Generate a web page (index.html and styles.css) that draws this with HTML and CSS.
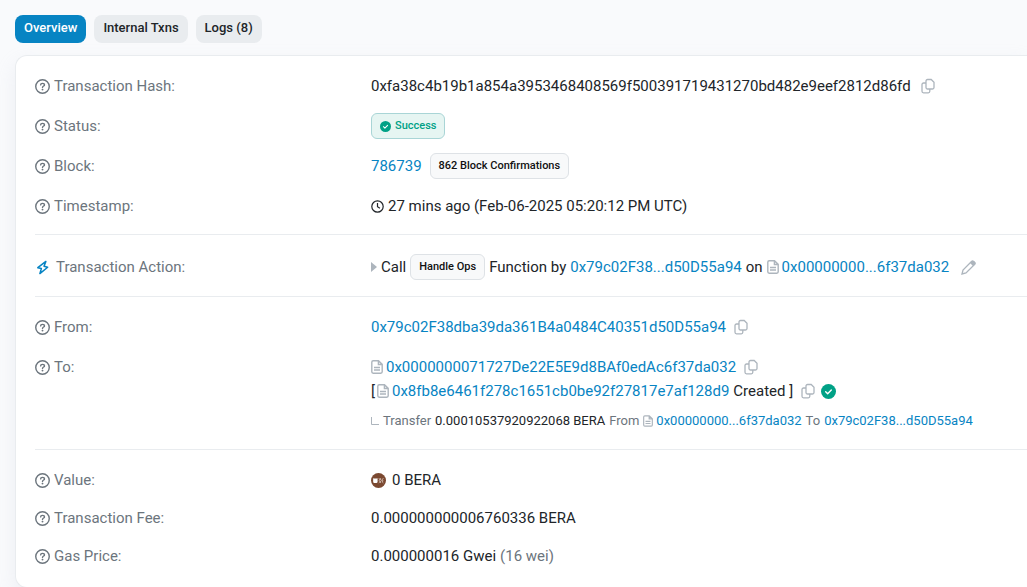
FILE: index.html
```html
<!DOCTYPE html>
<html lang="en">
<head>
<meta charset="utf-8">
<title>Transaction Details</title>
<meta name="viewport" content="width=device-width, initial-scale=1">
<link rel="stylesheet" href="styles.css">
</head>
<body>
<svg class="sprite" aria-hidden="true">
  <symbol id="help" viewBox="0 0 16 16"><circle cx="8" cy="8" r="7.200" fill="none" stroke="currentColor" stroke-width="1.500"/><path d="M6 6.300C6 5.200 6.700 4.700 8 4.700s2.100.6 2.100 1.600C10.100 7.500 8 7.500 8 9" fill="none" stroke="currentColor" stroke-width="1.500" stroke-linecap="round"/><circle cx="8" cy="11.300" r="1" fill="currentColor"/></symbol>
  <symbol id="copy" viewBox="0 0 14 16"><path d="M6.500 1.500h3.700l2.800 2.700v5.300a1.500 1.500 0 0 1-1.500 1.500h-5A1.500 1.500 0 0 1 5 9.500V3a1.500 1.500 0 0 1 1.500-1.500zM5 5H2.500A1.500 1.500 0 0 0 1 6.500v6.800a1.500 1.500 0 0 0 1.500 1.500h4.800a1.500 1.500 0 0 0 1.500-1.500V11" fill="none" stroke="currentColor" stroke-width="1.300"/></symbol>
  <symbol id="doc" viewBox="0 0 12 14"><path d="M2.200.8h5.300l3.700 3.600v7.400a1.400 1.400 0 0 1-1.400 1.400H2.200A1.400 1.400 0 0 1 .8 11.800V2.200A1.400 1.400 0 0 1 2.200.8zM7.400 1v3.500H11M3 7.500h6M3 10h6" fill="none" stroke="currentColor" stroke-width="1.400"/></symbol>
  <symbol id="check" viewBox="0 0 16 16"><circle cx="8" cy="8" r="8" fill="currentColor"/><path d="M5 8.300l2.100 2 3.900-4" fill="none" stroke="#fff" stroke-width="1.500" stroke-linecap="round" stroke-linejoin="round"/></symbol>
</svg>

<nav class="tabs">
  <button class="tab active" type="button">Overview</button>
  <button class="tab" type="button">Internal Txns</button>
  <button class="tab" type="button">Logs (8)</button>
</nav>

<main class="card">
  <dl class="section">
    <div class="row">
      <dt><svg class="help"><use href="#help"/></svg>Transaction Hash:</dt>
      <dd><div class="line">0xfa38c4b19b1a854a3953468408569f500391719431270bd482e9eef2812d86fd<button class="icon-btn hash-copy" type="button" aria-label="Copy hash"><svg class="copy"><use href="#copy"/></svg></button></div></dd>
    </div>
    <div class="row">
      <dt><svg class="help"><use href="#help"/></svg>Status:</dt>
      <dd><div class="line"><span class="badge success"><svg class="check-small"><use href="#check"/></svg>Success</span></div></dd>
    </div>
    <div class="row">
      <dt><svg class="help"><use href="#help"/></svg>Block:</dt>
      <dd><div class="line wide"><a href="#block">786739</a><span class="badge">862 Block Confirmations</span></div></dd>
    </div>
    <div class="row">
      <dt><svg class="help"><use href="#help"/></svg>Timestamp:</dt>
      <dd><div class="line"><svg class="clock" viewBox="0 0 13 13"><circle cx="6.500" cy="6.500" r="5.700"/><path d="M6.500 3v3.700l2.400 1.600"/></svg>27 mins ago (Feb-06-2025 05:20:12 PM UTC)</div></dd>
    </div>
  </dl>

  <dl class="section action-section">
    <div class="row">
      <dt class="action"><svg class="bolt" viewBox="0 0 14 16"><path d="M10.600 1.500 2 8.200l3.800.9-1.600 5.400 8.300-6.800-3.900-1z"/></svg>Transaction Action:</dt>
      <dd><div class="line"><svg class="caret" viewBox="0 0 6 10"><path d="M0 0l6 5L0 10z"/></svg>Call <span class="badge">Handle Ops</span> Function by <a href="#sender">0x79c02F38...d50D55a94</a> on <span class="contract"><svg class="doc"><use href="#doc"/></svg><a href="#target">0x00000000...6f37da032</a></span><button class="icon-btn edit" type="button" aria-label="Add note"><svg class="pencil" viewBox="0 0 15 15"><path d="M1 14l1-4 8.500-8.500a1.500 1.500 0 0 1 2.100 0l.9.900a1.500 1.500 0 0 1 0 2.100L5 13z"/><path class="tip" d="M9 3l2-2h2l1.500 1.500v1.500L12 6z"/></svg></button></div></dd>
    </div>
  </dl>

  <dl class="section">
    <div class="row">
      <dt><svg class="help"><use href="#help"/></svg>From:</dt>
      <dd><div class="line wide"><a href="#from">0x79c02F38dba39da361B4a0484C40351d50D55a94</a><button class="icon-btn" type="button" aria-label="Copy sender"><svg class="copy"><use href="#copy"/></svg></button></div></dd>
    </div>
    <div class="row">
      <dt><svg class="help"><use href="#help"/></svg>To:</dt>
      <dd>
        <div class="line wide"><span class="contract"><svg class="doc"><use href="#doc"/></svg><a href="#to">0x0000000071727De22E5E9d8BAf0edAc6f37da032</a></span><button class="icon-btn" type="button" aria-label="Copy recipient"><svg class="copy"><use href="#copy"/></svg></button></div>
        <div class="line tight">[<span class="contract"><svg class="doc"><use href="#doc"/></svg><a href="#created">0x8fb8e6461f278c1651cb0be92f27817e7af128d9</a></span><span class="created">Created ]</span><button class="icon-btn created-copy" type="button" aria-label="Copy created contract"><svg class="copy"><use href="#copy"/></svg></button><svg class="check"><use href="#check"/></svg></div>
        <div class="line transfer"><svg class="elbow" viewBox="0 0 8 8"><path d="M.5 0v7.500H8"/></svg>Transfer <span class="amount">0.00010537920922068 BERA</span> From <span class="contract"><svg class="doc"><use href="#doc"/></svg><a href="#target">0x00000000...6f37da032</a></span> To <a href="#sender">0x79c02F38...d50D55a94</a></div>
      </dd>
    </div>
  </dl>

  <dl class="section compact">
    <div class="row">
      <dt><svg class="help"><use href="#help"/></svg>Value:</dt>
      <dd><div class="line token"><svg class="coin" viewBox="0 0 16 16"><circle cx="8" cy="8" r="8" fill="#7b4931"/><path d="M2.300 5.500l1.200.4h2.300l1.200-.4v4.300l-1 .8H3.200l-.9-.8z" fill="#fff"/><path d="M8.300 5.500l1 1v1l-.8.500.8.800v1l-1 .8M10.200 5.500v1.500l.8.800-.8.900v1.900M13.200 5.500l-1.100 1.200v1l.9.500-.9.700v.8l1.100.9" fill="none" stroke="#e8d9d0" stroke-width=".8"/></svg>0 BERA</div></dd>
    </div>
    <div class="row">
      <dt><svg class="help"><use href="#help"/></svg>Transaction Fee:</dt>
      <dd><div class="line">0.000000000006760336 BERA</div></dd>
    </div>
    <div class="row">
      <dt><svg class="help"><use href="#help"/></svg>Gas Price:</dt>
      <dd><div class="line">0.000000016 Gwei <span class="muted">(16 wei)</span></div></dd>
    </div>
  </dl>
</main>
</body>
</html>
```
FILE: styles.css
```css
* { box-sizing: border-box; }

body {
  margin: 0;
  padding: 15px 0 0 15px;
  background: #f9fafc;
  color: #212529;
  font: 15px/24px Roboto, "Liberation Sans", sans-serif;
  overflow-x: hidden;
}

a { color: #0784c3; text-decoration: none; }
svg { flex: none; }
.sprite { display: none; }

.tabs { display: flex; gap: 8px; }

.tab {
  height: 28px;
  padding: 0 9px 2px;
  border: 0;
  border-radius: 8px;
  background: #e9ecef;
  color: #212529;
  font: 500 13px/16px Roboto, "Liberation Sans", sans-serif;
  white-space: nowrap;
}

.tab.active { background: #0784c3; color: #fff; }

.card {
  margin-top: 12px;
  padding: 0 0 4px 19px;
  border: 1px solid #e9ecef;
  border-right: 0;
  border-radius: 12px 0 0 12px;
  background: #fff;
  box-shadow: 0 8px 19px rgba(189, 197, 209, 0.2);
}

.section {
  display: flex;
  flex-direction: column;
  gap: 16px;
  margin: 0;
  padding: 18px 0 16px;
}

.section + .section { border-top: 1px solid #e9ecef; }
.action-section { padding: 20px 0 17px; }
.compact { padding-top: 19px; }

.row {
  display: grid;
  grid-template-columns: 336px minmax(0, 1fr);
  align-items: start;
}

dt {
  display: flex;
  align-items: center;
  gap: 4px;
  color: #6c757d;
}

dt.action { gap: 6px; }
dd { margin: 0; }

.line {
  display: flex;
  align-items: center;
  gap: 4px;
  height: 24px;
  white-space: nowrap;
}

.line.wide { gap: 8px; }
.line.tight { gap: 2px; }
.line.token { gap: 6px; }

.compact .row, .compact .line, .compact dt { height: 22px; line-height: 22px; }

.badge {
  display: flex;
  align-items: center;
  gap: 4px;
  height: 26px;
  padding: 0 8px;
  border: 1px solid #dee2e6;
  border-radius: 6px;
  background: #f8f9fa;
  color: #111;
  font-size: 11px;
  font-weight: 500;
}

.badge.success {
  border-color: #a9d5d6;
  background: #e6f5f2;
  color: #00a186;
}

.contract { display: flex; align-items: center; gap: 3px; }

.icon-btn {
  display: flex;
  padding: 0;
  border: 0;
  background: none;
  color: #adb5bd;
}

.hash-copy, .created-copy { margin-left: 6px; }
.created { margin-left: 2px; }
.edit { margin-left: 8px; }

.help { width: 15px; height: 15px; }
.copy { width: 14px; height: 16px; }
.doc { width: 12px; height: 14px; color: #adb5bd; }
.check { width: 15px; height: 15px; margin-left: 4px; color: #00a186; }
.check-small { width: 11px; height: 11px; }
.coin { width: 15px; height: 15px; }
.clock { width: 13px; height: 13px; fill: none; stroke: #212529; stroke-width: 1.2; }
.bolt { width: 15px; height: 15px; fill: none; stroke: #0784c3; stroke-width: 1.6; stroke-linejoin: round; }
.caret { width: 6px; height: 10px; fill: #adb5bd; }
.elbow { width: 8px; height: 8px; fill: none; stroke: #adb5bd; }
.pencil { width: 15px; height: 15px; fill: none; stroke: #adb5bd; stroke-width: 1.3; }
.pencil .tip { fill: #adb5bd; stroke: none; }

.transfer { margin-top: 6px; color: #6c757d; font-size: 13px; }
.transfer .doc { width: 10px; height: 12px; }
.amount { color: #212529; }
.muted { color: #6c757d; }
```
